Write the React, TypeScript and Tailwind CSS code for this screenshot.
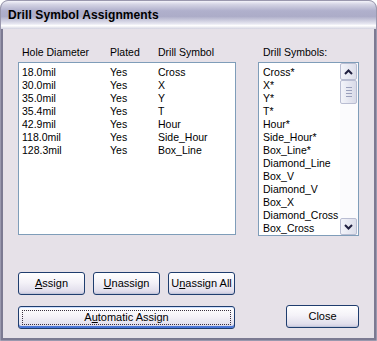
import type { ReactNode } from "react";

const holes = [
	["18.0mil", "Yes", "Cross"],
	["30.0mil", "Yes", "X"],
	["35.0mil", "Yes", "Y"],
	["35.4mil", "Yes", "T"],
	["42.9mil", "Yes", "Hour"],
	["118.0mil", "Yes", "Side_Hour"],
	["128.3mil", "Yes", "Box_Line"],
];

const symbols = [
	"Cross*",
	"X*",
	"Y*",
	"T*",
	"Hour*",
	"Side_Hour*",
	"Box_Line*",
	"Diamond_Line",
	"Box_V",
	"Diamond_V",
	"Box_X",
	"Diamond_Cross",
	"Box_Cross",
];

function Btn({
	children,
	className = "",
	focused = false,
}: {
	children: ReactNode;
	className?: string;
	focused?: boolean;
}) {
	return (
		<button
			type="button"
			className={`relative h-[23px] rounded-[3px] border border-[#1f3d6e] bg-[linear-gradient(#ffffff,#f4f2f8_45%,#e2dfec_85%,#cfcbe0)] text-[11px] leading-[13px] text-black ${
				focused
					? "shadow-[inset_0_-2px_0_#4a76d8,inset_0_1px_0_#cfe0ff]"
					: "shadow-[inset_0_-1px_0_#c2c6da]"
			} ${className}`}
		>
			{focused && (
				<span className="absolute inset-x-[3px] top-[3px] bottom-[3px] border border-dotted border-[#3a3040]" />
			)}
			<span className="relative">{children}</span>
		</button>
	);
}

function ScrollBtn({ down = false }: { down?: boolean }) {
	return (
		<div className="flex h-[17px] w-[17px] items-center justify-center rounded-[2px] border border-[#b9bdd2] bg-[linear-gradient(90deg,#f3f4fa,#dcdeea)]">
			<svg width="9" height="6" viewBox="0 0 9 6">
				<path
					d={down ? "M1 1 L4.5 4.5 L8 1" : "M1 5 L4.5 1.5 L8 5"}
					fill="none"
					stroke="#202040"
					strokeWidth="2"
				/>
			</svg>
		</div>
	);
}

export default function App() {
	return (
		<div className="flex h-[341px] w-[377px] flex-col overflow-hidden rounded-t-[8px] border border-[#9a98ae] bg-[#7c7a92] font-['Liberation_Sans',Arial,sans-serif] text-black">
			{/* title bar */}
			<div className="flex h-[28px] shrink-0 items-center bg-[linear-gradient(#f4f4fa,#d4d4e4_12%,#b0b0cc_35%,#acacc8_55%,#e8e8f2_82%,#ffffff_88%,#d2d2e0)] pl-[7px]">
				<span className="text-[12px] font-bold tracking-[0.1px]">
					Drill Symbol Assignments
				</span>
			</div>

			{/* client */}
			<div className="mx-[2px] mb-[2px] flex-1 bg-[#e6e1e8] pl-[15px] pt-[17px] text-[10.5px] leading-[13px]">
				<div className="flex">
					<div className="w-[218px]">
						<div className="grid grid-cols-[88px_48px_1fr] pl-[4px]">
							<span>Hole Diameter</span>
							<span>Plated</span>
							<span>Drill Symbol</span>
						</div>
						<div className="mt-[3px] h-[173px] border border-[#7f9db9] bg-white pt-[3px]">
							{holes.map((r) => (
								<div
									key={r[0]}
									className="grid h-[13px] grid-cols-[88px_48px_1fr] pl-[3px]"
								>
									<span>{r[0]}</span>
									<span>{r[1]}</span>
									<span>{r[2]}</span>
								</div>
							))}
						</div>
					</div>

					<div className="ml-[22px] w-[101px]">
						<div className="pl-[5px]">Drill Symbols:</div>
						<div className="mt-[3px] flex h-[174px] border border-[#7f9db9] bg-white">
							<div className="flex-1 pl-[4px] pt-[3px]">
								{symbols.map((s) => (
									<div key={s} className="h-[13px] whitespace-nowrap">
										{s}
									</div>
								))}
							</div>
							<div className="flex w-[18px] flex-col justify-between bg-[#fbfbfd] pr-[1px]">
								<div>
									<ScrollBtn />
									<div className="flex h-[24px] w-[17px] flex-col items-center justify-center gap-[2px] rounded-[2px] border border-[#b9bdd2] bg-[linear-gradient(90deg,#f3f4fa,#d8dae8)]">
										<div className="h-px w-[6px] bg-[#9aa0bc]" />
										<div className="h-px w-[6px] bg-[#9aa0bc]" />
										<div className="h-px w-[6px] bg-[#9aa0bc]" />
										<div className="h-px w-[6px] bg-[#9aa0bc]" />
									</div>
								</div>
								<ScrollBtn down />
							</div>
						</div>
					</div>
				</div>

				{/* buttons */}
				<div className="mt-[36px] flex">
					<div className="flex w-[218px] flex-col gap-[11px]">
						<div className="flex gap-[8px]">
							<Btn className="w-[67px]">
								<u>A</u>ssign
							</Btn>
							<Btn className="w-[67px]">
								<u>U</u>nassign
							</Btn>
							<Btn className="w-[67px]">
								U<u>n</u>assign All
							</Btn>
						</div>
						<Btn className="w-[217px]" focused>
							A<u>u</u>tomatic Assign
						</Btn>
					</div>
					<div className="ml-[50px] flex items-end pb-[1px]">
						<Btn className="w-[73px]">Close</Btn>
					</div>
				</div>
			</div>
		</div>
	);
}
